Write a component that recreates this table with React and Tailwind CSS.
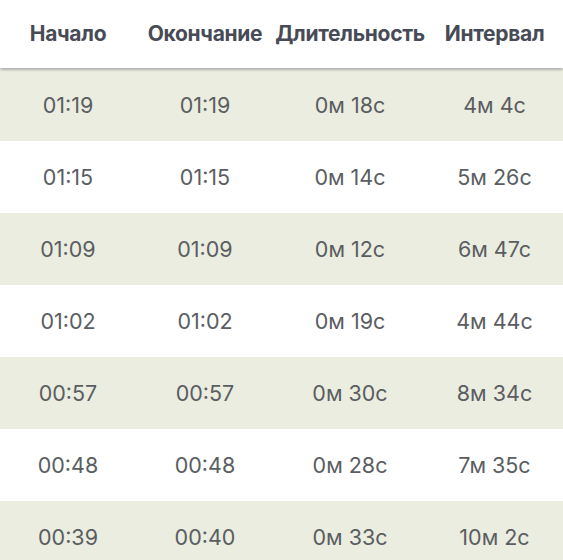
import React from "react";

const rows = [
  ["01:19", "01:19", "0м 18с", "4м 4с"],
  ["01:15", "01:15", "0м 14с", "5м 26с"],
  ["01:09", "01:09", "0м 12с", "6м 47с"],
  ["01:02", "01:02", "0м 19с", "4м 44с"],
  ["00:57", "00:57", "0м 30с", "8м 34с"],
  ["00:48", "00:48", "0м 28с", "7м 35с"],
  ["00:39", "00:40", "0м 33с", "10м 2с"],
];

const cols = "grid grid-cols-[136px_138px_152px_137px]";

export default function App() {
  return (
    <div className="w-[563px] h-[560px] overflow-hidden bg-white" style={{ fontFamily: "Inter, 'Noto Sans', sans-serif" }}>
      <div className={`${cols} relative z-10 h-[68px] items-center bg-white shadow-[0_1px_3px_rgba(0,0,0,0.45)] text-[21px] font-bold text-[#474b56] tracking-[-0.3px]`}>
        <div className="text-center">Начало</div>
        <div className="text-center">Окончание</div>
        <div className="text-center">Длительность</div>
        <div className="text-center">Интервал</div>
      </div>
      <div className="mt-[1px]">
        {rows.map((r, i) => (
          <div
            key={i}
            className={`${cols} h-[72px] items-center text-[21.5px] text-[#5a5d61] ${i % 2 === 0 ? "bg-[#ebede0]" : "bg-white"}`}
          >
            {r.map((c, j) => (
              <div key={j} className="text-center">{c}</div>
            ))}
          </div>
        ))}
      </div>
    </div>
  );
}
